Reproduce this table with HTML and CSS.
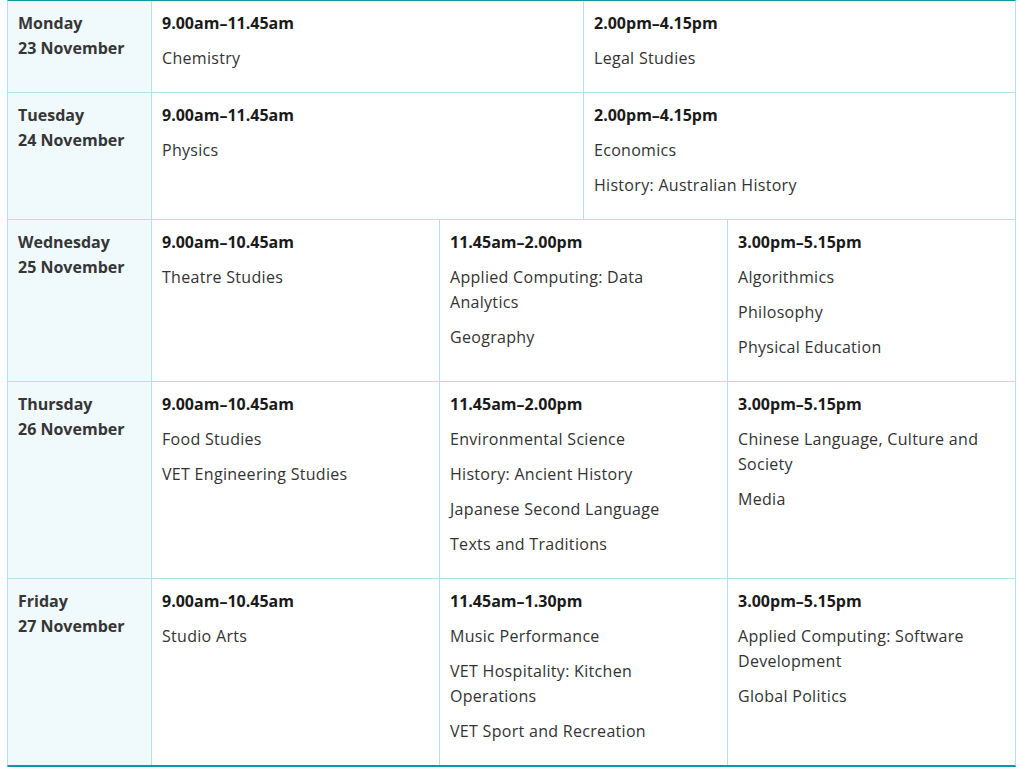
FILE: index.html
```html
<!DOCTYPE html>
<html lang="en">
<head>
<meta charset="utf-8">
<title>Exam timetable</title>
<link rel="stylesheet" href="styles.css">
</head>
<body>
<div class="timetable">
  <div class="row">
    <div class="day"><p>Monday</p><p>23 November</p></div>
    <div class="slots">
      <div class="slot"><p class="time">9.00am–11.45am</p><p>Chemistry</p></div>
      <div class="slot"><p class="time">2.00pm–4.15pm</p><p>Legal Studies</p></div>
    </div>
  </div>
  <div class="row">
    <div class="day"><p>Tuesday</p><p>24 November</p></div>
    <div class="slots">
      <div class="slot"><p class="time">9.00am–11.45am</p><p>Physics</p></div>
      <div class="slot"><p class="time">2.00pm–4.15pm</p><p>Economics</p><p>History: Australian History</p></div>
    </div>
  </div>
  <div class="row">
    <div class="day"><p>Wednesday</p><p>25 November</p></div>
    <div class="slots">
      <div class="slot"><p class="time">9.00am–10.45am</p><p>Theatre Studies</p></div>
      <div class="slot"><p class="time">11.45am–2.00pm</p><p>Applied Computing: Data Analytics</p><p>Geography</p></div>
      <div class="slot"><p class="time">3.00pm–5.15pm</p><p>Algorithmics</p><p>Philosophy</p><p>Physical Education</p></div>
    </div>
  </div>
  <div class="row">
    <div class="day"><p>Thursday</p><p>26 November</p></div>
    <div class="slots">
      <div class="slot"><p class="time">9.00am–10.45am</p><p>Food Studies</p><p>VET Engineering Studies</p></div>
      <div class="slot"><p class="time">11.45am–2.00pm</p><p>Environmental Science</p><p>History: Ancient History</p><p>Japanese Second Language</p><p>Texts and Traditions</p></div>
      <div class="slot"><p class="time">3.00pm–5.15pm</p><p>Chinese Language, Culture and Society</p><p>Media</p></div>
    </div>
  </div>
  <div class="row last">
    <div class="day"><p>Friday</p><p>27 November</p></div>
    <div class="slots">
      <div class="slot"><p class="time">9.00am–10.45am</p><p>Studio Arts</p></div>
      <div class="slot"><p class="time">11.45am–1.30pm</p><p>Music Performance</p><p>VET Hospitality: Kitchen Operations</p><p>VET Sport and Recreation</p></div>
      <div class="slot"><p class="time">3.00pm–5.15pm</p><p>Applied Computing: Software Development</p><p>Global Politics</p></div>
    </div>
  </div>
</div>
</body>
</html>
```

FILE: styles.css
```css
html, body {
  margin: 0;
  padding: 0;
  background: #ffffff;
}

body {
  font-family: "Open Sans", "Liberation Sans", sans-serif;
  font-size: 16px;
  line-height: 25px;
  color: #333333;
}

.timetable {
  margin-left: 7px;
  width: 1009px;
  border-top: 1px solid #0b9a9e;
  border-bottom: 2px solid #0b9a9e;
  border-left: 1px solid #b7e0ea;
  border-right: 1px solid #b7e0ea;
  box-sizing: border-box;
}

.row {
  display: grid;
  grid-template-columns: 144px 1fr;
  border-bottom: 1px solid #b7e0ea;
}

.row.last {
  border-bottom: none;
}

.day {
  background: #f0f9fc;
  border-right: 1px solid #b7e0ea;
  padding: 10px 10px 11px;
  font-weight: 700;
  color: #363636;
}

.day p {
  margin: 0;
}

.slots {
  display: flex;
}

.slot {
  flex: 1 1 0;
  min-width: 0;
  padding: 10px 16px 11px 10px;
  border-left: 1px solid #b7e0ea;
  letter-spacing: 0.3px;
}

.slot:first-child {
  border-left: none;
}

.slot p {
  margin: 0 0 10px;
}

.slot p.time {
  font-weight: 700;
  color: #1a1a1a;
  letter-spacing: 0;
}
```
